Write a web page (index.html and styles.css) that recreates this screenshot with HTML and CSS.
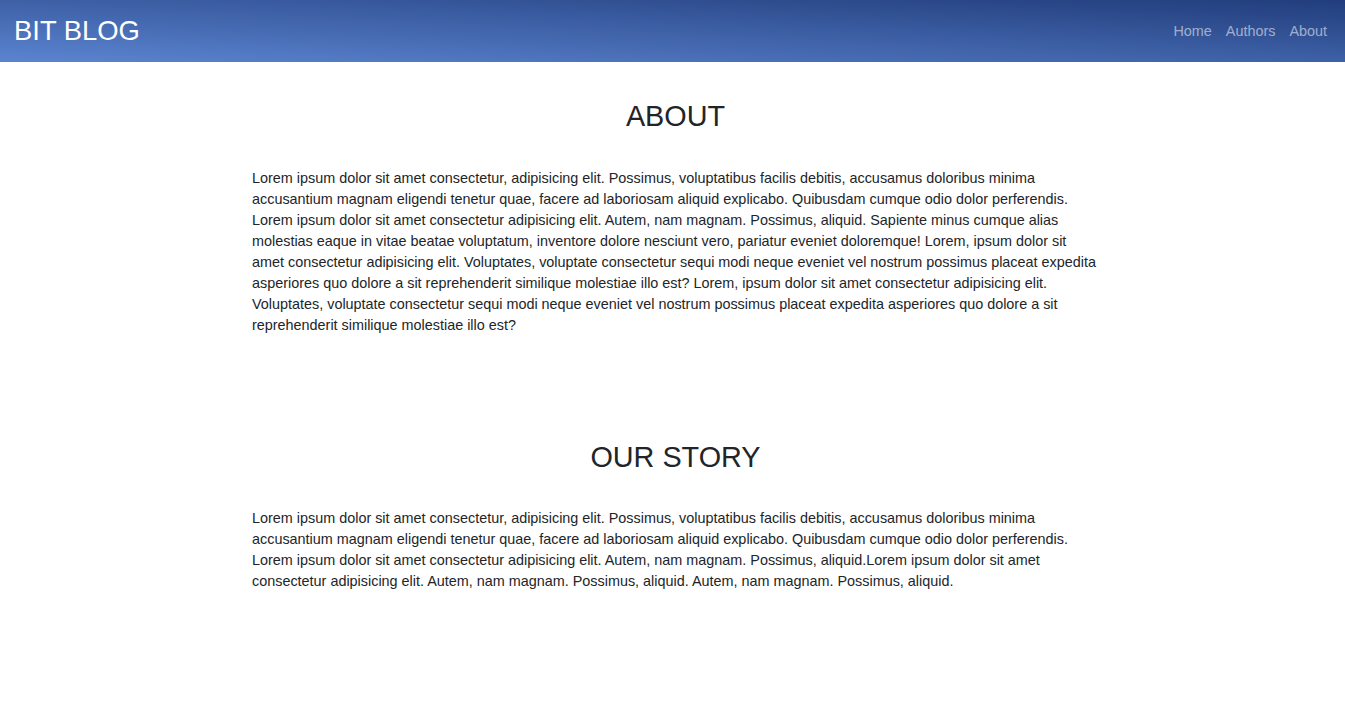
FILE: index.html
```html
<!DOCTYPE html>
<html lang="en">
<head>
<meta charset="utf-8">
<title>BIT BLOG - About</title>
<link rel="stylesheet" href="styles.css">
</head>
<body>
<header class="navbar">
  <a class="brand" href="#">BIT BLOG</a>
  <nav class="nav">
    <a class="nav-link" href="#">Home</a>
    <a class="nav-link" href="#">Authors</a>
    <a class="nav-link" href="#">About</a>
  </nav>
</header>
<main class="content">
  <section class="section">
    <h2 class="title">ABOUT</h2>
    <p class="text">Lorem ipsum dolor sit amet consectetur, adipisicing elit. Possimus, voluptatibus facilis debitis, accusamus doloribus minima accusantium magnam eligendi tenetur quae, facere ad laboriosam aliquid explicabo. Quibusdam cumque odio dolor perferendis. Lorem ipsum dolor sit amet consectetur adipisicing elit. Autem, nam magnam. Possimus, aliquid. Sapiente minus cumque alias molestias eaque in vitae beatae voluptatum, inventore dolore nesciunt vero, pariatur eveniet doloremque! Lorem, ipsum dolor sit amet consectetur adipisicing elit. Voluptates, voluptate consectetur sequi modi neque eveniet vel nostrum possimus placeat expedita asperiores quo dolore a sit reprehenderit similique molestiae illo est? Lorem, ipsum dolor sit amet consectetur adipisicing elit. Voluptates, voluptate consectetur sequi modi neque eveniet vel nostrum possimus placeat expedita asperiores quo dolore a sit reprehenderit similique molestiae illo est?</p>
  </section>
  <section class="section">
    <h2 class="title">OUR STORY</h2>
    <p class="text">Lorem ipsum dolor sit amet consectetur, adipisicing elit. Possimus, voluptatibus facilis debitis, accusamus doloribus minima accusantium magnam eligendi tenetur quae, facere ad laboriosam aliquid explicabo. Quibusdam cumque odio dolor perferendis. Lorem ipsum dolor sit amet consectetur adipisicing elit. Autem, nam magnam. Possimus, aliquid.Lorem ipsum dolor sit amet consectetur adipisicing elit. Autem, nam magnam. Possimus, aliquid. Autem, nam magnam. Possimus, aliquid.</p>
  </section>
</main>
</body>
</html>
```

FILE: styles.css
```css
html, body {
  margin: 0;
  padding: 0;
}

body {
  font-family: "Liberation Sans", Arial, Helvetica, sans-serif;
  font-size: 14.4px;
  line-height: 21px;
  color: #212529;
  background: #ffffff;
}

.navbar {
  height: 62px;
  display: flex;
  align-items: center;
  justify-content: space-between;
  padding: 0 11px 0 14px;
  background: linear-gradient(to top right, #5b84d0, #213d7c);
}

.brand {
  color: #ffffff;
  text-decoration: none;
  font-size: 27.4px;
  line-height: 1;
}

.nav {
  display: flex;
  align-items: center;
}

.nav-link {
  color: rgba(255, 255, 255, 0.55);
  text-decoration: none;
  font-size: 14.4px;
  padding: 0 7px;
}

.content {
  width: 853px;
  margin: 0 auto;
  padding: 37px 0 0 6px;
  box-sizing: border-box;
}

.section + .section {
  margin-top: 104px;
}

.title {
  margin: 0 0 34px;
  font-size: 28.8px;
  font-weight: 400;
  line-height: 1.2;
  text-align: center;
  color: #212529;
}

.text {
  margin: 0;
}
```
